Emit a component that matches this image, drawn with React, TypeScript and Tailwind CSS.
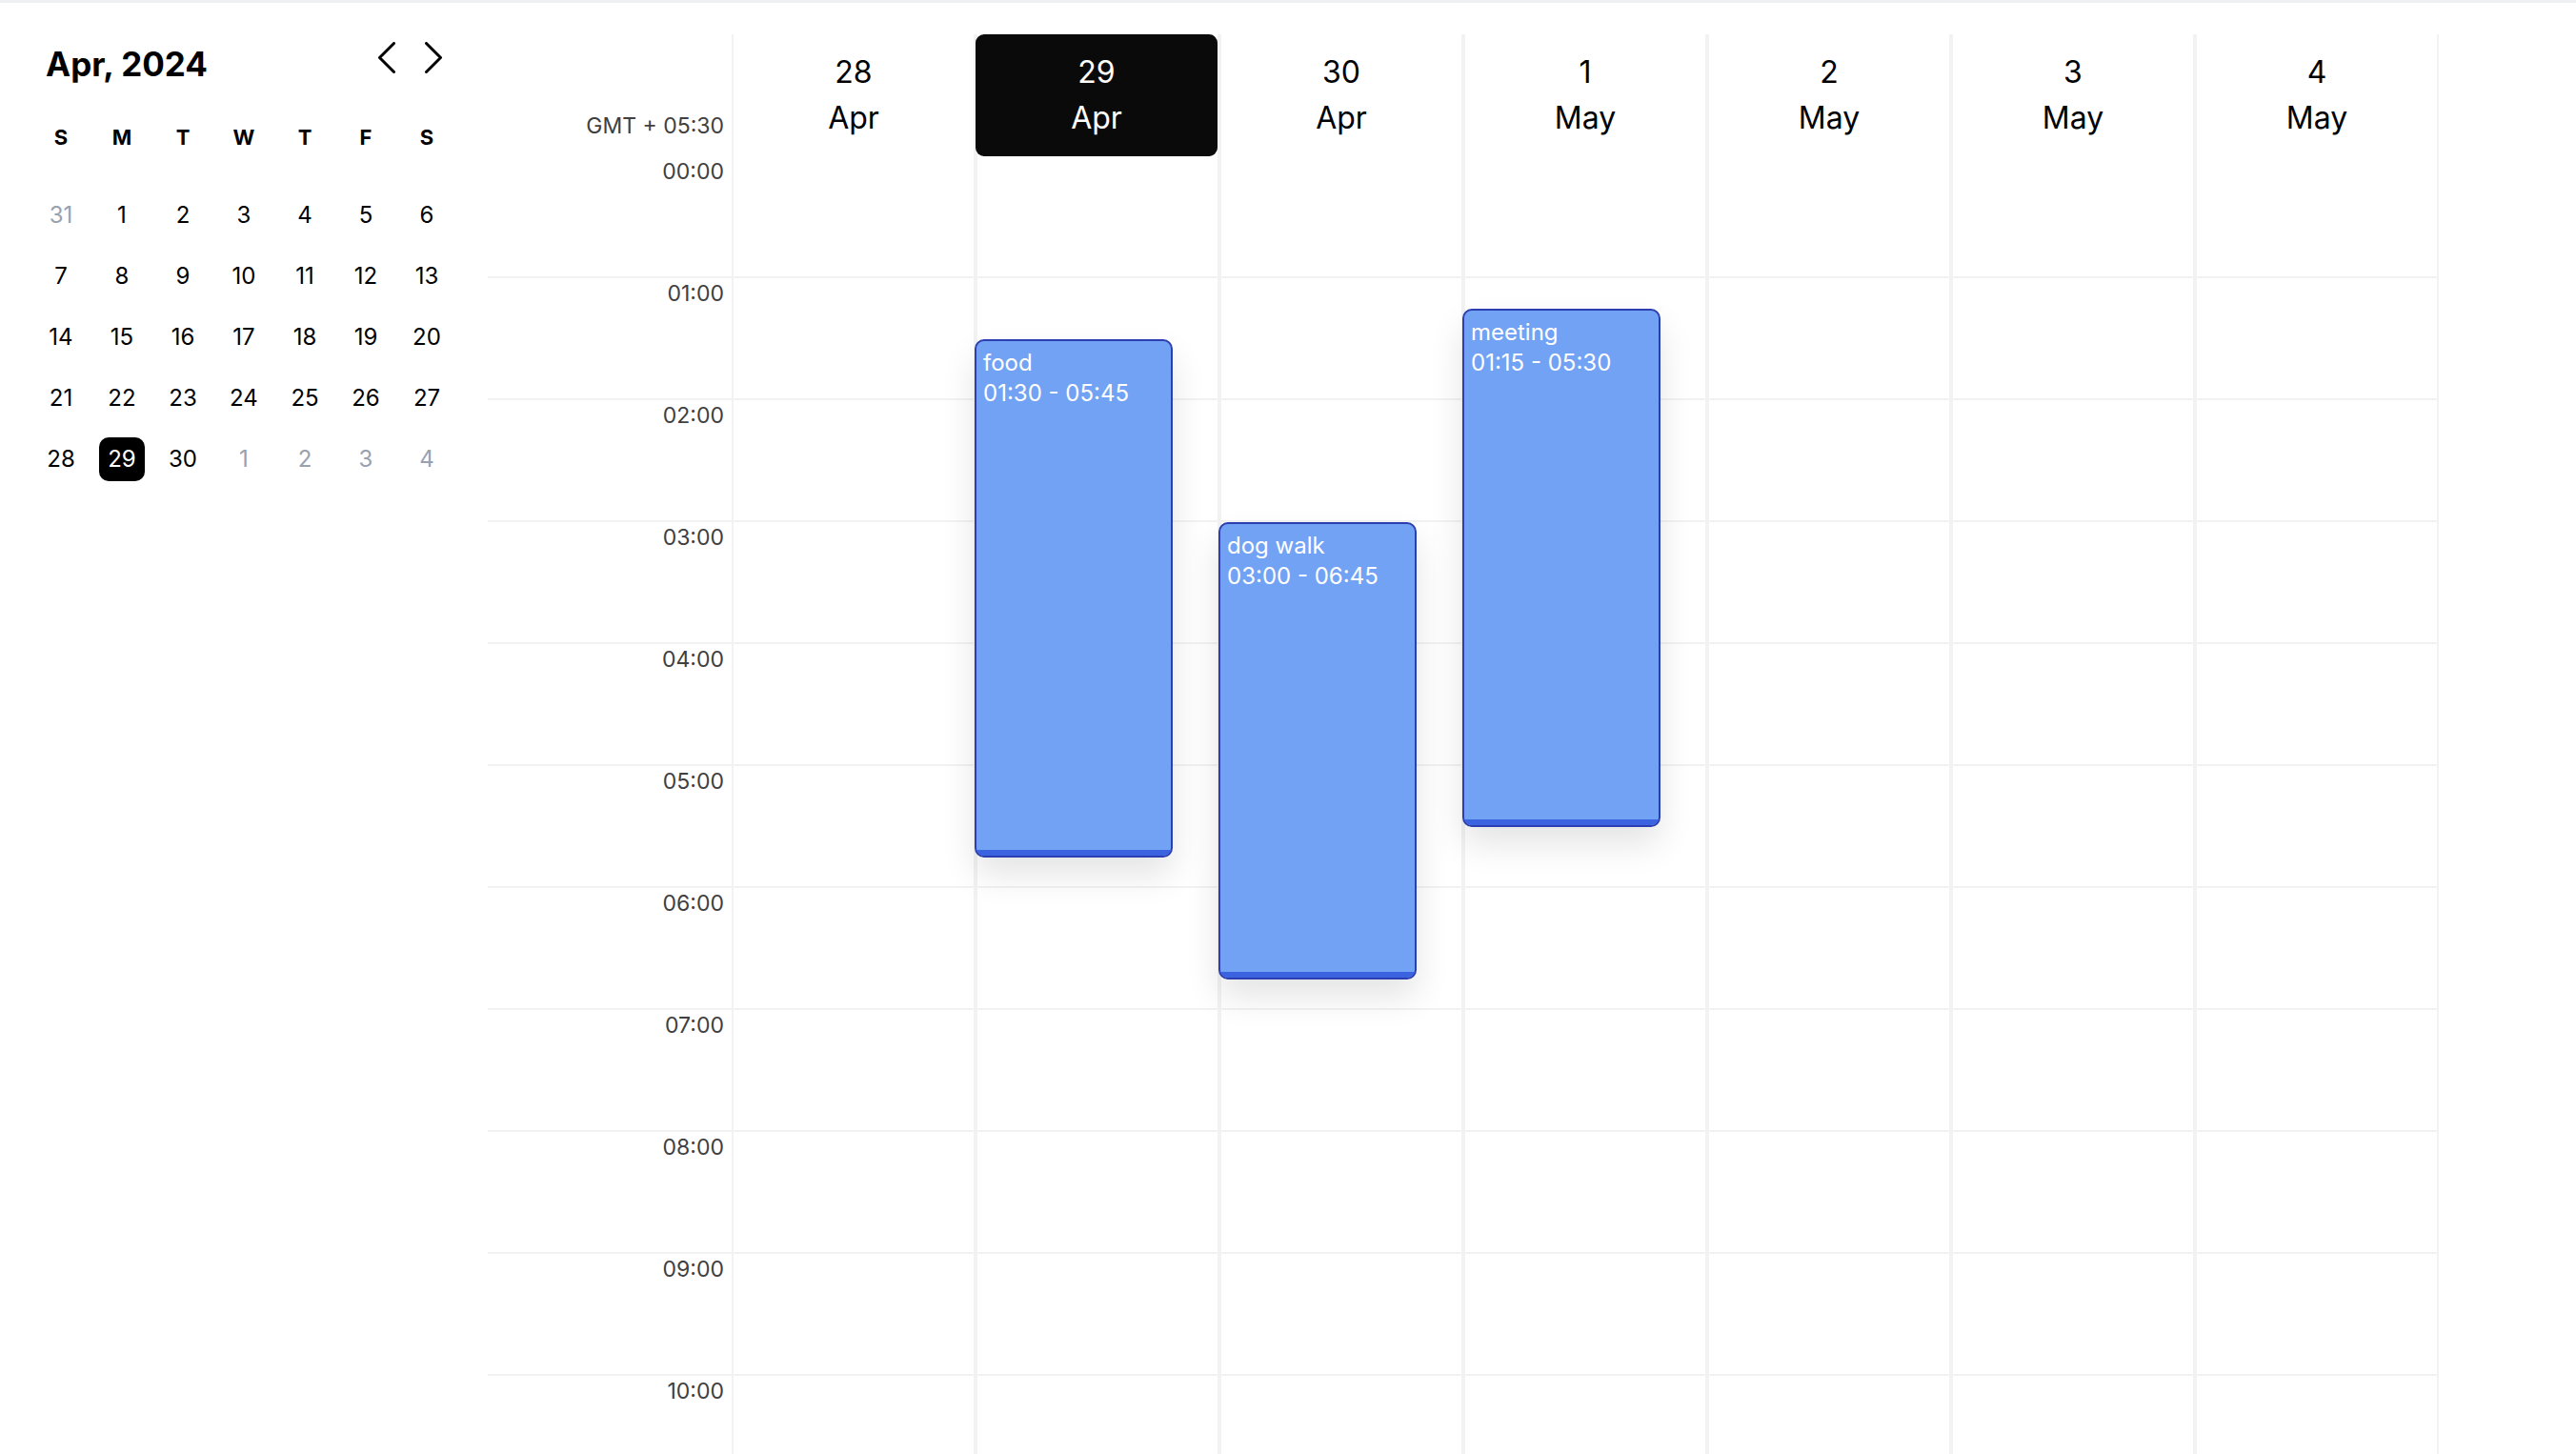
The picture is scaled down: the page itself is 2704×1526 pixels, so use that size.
import React from "react";

type CalEvent = {
  title: string;
  day: number;
  start: number;
  end: number;
};

const HOUR = 128;

const weekDays = ["S", "M", "T", "W", "T", "F", "S"];

const miniWeeks: { d: number; muted?: boolean }[][] = [
  [{ d: 31, muted: true }, { d: 1 }, { d: 2 }, { d: 3 }, { d: 4 }, { d: 5 }, { d: 6 }],
  [{ d: 7 }, { d: 8 }, { d: 9 }, { d: 10 }, { d: 11 }, { d: 12 }, { d: 13 }],
  [{ d: 14 }, { d: 15 }, { d: 16 }, { d: 17 }, { d: 18 }, { d: 19 }, { d: 20 }],
  [{ d: 21 }, { d: 22 }, { d: 23 }, { d: 24 }, { d: 25 }, { d: 26 }, { d: 27 }],
  [
    { d: 28 },
    { d: 29 },
    { d: 30 },
    { d: 1, muted: true },
    { d: 2, muted: true },
    { d: 3, muted: true },
    { d: 4, muted: true },
  ],
];

const days = [
  { num: 28, month: "Apr" },
  { num: 29, month: "Apr", today: true },
  { num: 30, month: "Apr" },
  { num: 1, month: "May" },
  { num: 2, month: "May" },
  { num: 3, month: "May" },
  { num: 4, month: "May" },
];

const events: CalEvent[] = [
  { title: "food", day: 1, start: 1.5, end: 5.75 },
  { title: "dog walk", day: 2, start: 3, end: 6.75 },
  { title: "meeting", day: 3, start: 1.25, end: 5.5 },
];

const pad = (n: number) => String(n).padStart(2, "0");
const fmt = (h: number) => `${pad(Math.floor(h))}:${pad(Math.round((h % 1) * 60))}`;

// only the hours that fit in the visible area
const hours = Array.from({ length: 11 }, (_, i) => i);

const Chevron = ({ dir }: { dir: "left" | "right" }) => (
  <svg width="18" height="33" viewBox="0 0 18 33" fill="none">
    <polyline
      points={dir === "left" ? "16.5,1.5 1.5,16.5 16.5,31.5" : "1.5,1.5 16.5,16.5 1.5,31.5"}
      stroke="black"
      strokeWidth="3"
      strokeLinecap="round"
      strokeLinejoin="round"
    />
  </svg>
);

const MiniCalendar: React.FC = () => {
  return (
    <div className="w-[512px] shrink-0 pt-[42px] px-8">
      {/* Month header */}
      <div className="flex items-start justify-between px-4">
        <h2 className="text-[35px] leading-[44px] font-bold text-black">Apr, 2024</h2>
        <div className="flex gap-[31px] mt-[-1px]">
          <button>
            <Chevron dir="left" />
          </button>
          <button>
            <Chevron dir="right" />
          </button>
        </div>
      </div>

      {/* Week days */}
      <div className="grid grid-cols-7 mt-[41px]">
        {weekDays.map((w, i) => (
          <div key={i} className="text-center text-[22px] leading-7 font-bold text-black">
            {w}
          </div>
        ))}
      </div>

      {/* Dates */}
      <div className="grid grid-cols-7 mt-[36px]">
        {miniWeeks.flat().map((c, i) => {
          const selected = !c.muted && c.d === 29;
          return (
            <div key={i} className="h-[64px] flex items-center justify-center">
              {selected ? (
                <span className="w-12 h-[46px] rounded-[10px] bg-black text-white text-2xl flex items-center justify-center">
                  {c.d}
                </span>
              ) : (
                <span className={`text-2xl ${c.muted ? "text-gray-400" : "text-black"}`}>{c.d}</span>
              )}
            </div>
          );
        })}
      </div>
    </div>
  );
};

const EventCard: React.FC<{ ev: CalEvent }> = ({ ev }) => (
  <div
    className="absolute left-[-3px] w-[208px] flex flex-col rounded-[10px] border-2 border-[#2b3fb0] bg-[#72a2f3] overflow-hidden shadow-[0_18px_36px_rgba(0,0,0,0.11)] z-10"
    style={{ top: HOUR + ev.start * HOUR, height: (ev.end - ev.start) * HOUR }}
  >
    <div className="flex-1 px-[7px] pt-[7px] text-2xl text-white">
      <div>{ev.title}</div>
      <div>
        {fmt(ev.start)} - {fmt(ev.end)}
      </div>
    </div>
    <div className="h-[6px] bg-[#3b62df]" />
  </div>
);

const App: React.FC = () => {
  return (
    <div className="h-screen w-full overflow-hidden border-t-[3px] border-[#eef0f3] bg-white flex font-['Inter','Noto_Sans',sans-serif] text-black">
      <MiniCalendar />

      {/* Week grid */}
      <div className="flex pt-[33px]">
        {/* Time column */}
        <div className="w-[256px] shrink-0">
          <div className="h-[128px] flex items-end justify-end pr-[8px] pb-[18px] text-[23px] leading-7 text-[#404040]">
            GMT + 05:30
          </div>
          {hours.map((h) => (
            <div
              key={h}
              className="h-[128px] border-b-2 border-[#f2f2f2] text-right pr-[8px] pt-[2px] text-[23px] leading-7 text-[#404040]"
            >
              {pad(h)}:00
            </div>
          ))}
        </div>

        {/* Day columns */}
        {days.map((d, i) => (
          <div key={i} className="relative w-[256px] shrink-0 border-x-2 border-[#f2f2f2]">
            <div className="h-[128px]">
              <div
                className={`h-full text-center pt-[16px] text-[32px] leading-[48px] ${
                  d.today ? "ml-[-2px] rounded-[9px] bg-[#0a0a0a] text-white" : "text-black"
                }`}
              >
                <div>{d.num}</div>
                <div>{d.month}</div>
              </div>
            </div>
            {hours.map((h) => (
              <div key={h} className="h-[128px] border-b-2 border-[#f2f2f2]" />
            ))}
            {events
              .filter((ev) => ev.day === i)
              .map((ev) => (
                <EventCard key={ev.title} ev={ev} />
              ))}
          </div>
        ))}
      </div>
    </div>
  );
};

export default App;
